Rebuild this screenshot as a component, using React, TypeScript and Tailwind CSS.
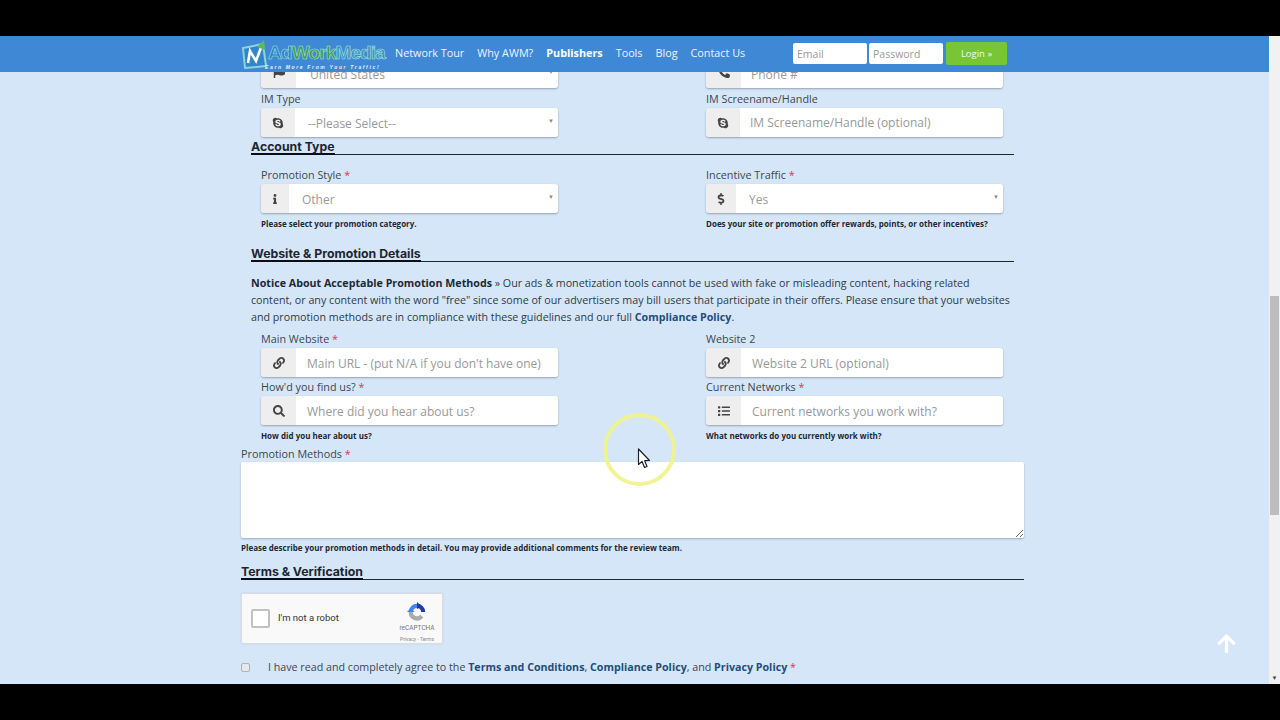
import React from 'react';
import { FaArrowUp, FaDollarSign, FaFlag, FaInfo, FaLink, FaList, FaPhone, FaSearch, FaSkype } from 'react-icons/fa';

const Star = () => <span className="text-[#d9364f]"> *</span>;

const Label: React.FC<{ text: string; required?: boolean }> = ({ text, required }) => (
  <label className="block h-[17px] text-[10.8px] leading-[15px] text-[#3d4650]">
    {text}
    {required && <Star />}
  </label>
);

const Help: React.FC<{ text: string; className?: string }> = ({ text, className = '' }) => (
  <p className={`h-[15px] text-[8px] leading-[15px] font-bold text-[#1f2933] ${className}`}>{text}</p>
);

const Heading: React.FC<{ text: string; className?: string }> = ({ text, className = '' }) => (
  <div className={`flex h-[17px] border-b border-[#1c2836] ${className}`}>
    <span className="h-[17px] border-b-2 border-[#0b0f14] font-['Inter',sans-serif] text-[12.3px] leading-[18px] font-bold text-[#1d2630]">
      {text}
    </span>
  </div>
);

interface FieldProps {
  icon: React.ReactNode;
  addon: string;
  text: string;
  select?: boolean;
  pad: string;
}

const Field: React.FC<FieldProps> = ({ icon, addon, text, select, pad }) => (
  <div className="relative flex h-[29px] w-[297px] rounded-[3px] shadow-[0_1px_2px_rgba(0,0,0,0.3)]">
    <div className={`flex shrink-0 items-center justify-center rounded-l-[3px] bg-[#eeeeee] text-[12px] text-[#444] ${addon}`}>{icon}</div>
    {select ? (
      <>
        <select defaultValue={text} className={`min-w-0 flex-1 appearance-none rounded-r-[3px] bg-white pt-[2px] text-[12px] text-[#999] outline-none ${pad}`}>
          <option>{text}</option>
        </select>
        <span className="absolute top-[9px] right-[4px] text-[6px] leading-[9px] text-[#888]">▼</span>
      </>
    ) : (
      <input placeholder={text} className={`min-w-0 flex-1 rounded-r-[3px] bg-white pt-[2px] text-[12px] outline-none placeholder:text-[#999] ${pad}`} />
    )}
  </div>
);

const Row: React.FC<{ left: React.ReactNode; right: React.ReactNode; className?: string }> = ({ left, right, className = '' }) => (
  <div className={`flex gap-[148px] px-[20px] ${className}`}>
    <div className="w-[297px]">{left}</div>
    <div className="w-[297px]">{right}</div>
  </div>
);

const Logo = () => (
  <div className="flex h-[36px] w-[146px] shrink-0 items-center">
    <svg viewBox="0 0 27 31" className="h-[31px] w-[27px] shrink-0">
      <path d="M2 9 L22 5 L25 27 L4 29 Z" fill="#2f86c9" stroke="#8fd3d6" strokeWidth="2" strokeLinejoin="round" />
      <path d="M7 24 L9 12 L15 22 L21 6" fill="none" stroke="#ffffff" strokeWidth="2.6" />
      <path d="M16 8 L23 1 L24 11 Z" fill="#5cb85c" />
    </svg>
    <div className="flex w-[119px] flex-col pt-[5px]">
      <span className="font-['Liberation_Sans',sans-serif] text-[19px] leading-[20px] font-bold tracking-[-0.85px] [-webkit-text-stroke:0.6px_#a9e3d4]">
        <span className="text-[#2a7fd0]">Ad</span>
        <span className="text-[#3f9a4a]">Work</span>
        <span className="text-[#3a93c8]">Media</span>
      </span>
      <span className="-ml-[3px] mt-[1px] whitespace-nowrap font-['Liberation_Sans',sans-serif] text-[5px] leading-[6px] font-bold tracking-[1.65px] text-[#e6f0fa] italic">
        Earn More From Your Traffic!
      </span>
    </div>
  </div>
);

const RecaptchaLogo = () => (
  <svg viewBox="0 0 24 24" className="h-[22px] w-[22px]">
    <path d="M12 3 A9 9 0 0 1 21 12 L16.5 12 A4.5 4.5 0 0 0 12 7.5 Z" fill="#1c3aa9" />
    <path d="M3 12 A9 9 0 0 1 12 3 L12 7.5 A4.5 4.5 0 0 0 7.5 12 Z" fill="#4285f4" />
    <path d="M3 12 A9 9 0 0 0 19 18 L15.5 15 A4.5 4.5 0 0 1 7.5 12 Z" fill="#ababab" />
    <path d="M1 12 L9.5 12 L5 8 Z" fill="#4285f4" />
    <path d="M12 1 L12 9 L16 5 Z" fill="#1c3aa9" />
  </svg>
);

export default function App() {
  return (
    <div className="h-[720px] w-[1280px] overflow-hidden bg-black py-[36px] font-['Open_Sans',sans-serif]">
      <div className="relative flex h-[648px] overflow-hidden bg-[#d5e6f9]">
        <header className="absolute top-0 right-[11px] left-0 z-10 flex h-[36px] items-center bg-[#3f88d5] pl-[241px]">
          <Logo />
          <nav className="mb-[2px] ml-[8px] flex gap-[13px] text-[10.8px] text-[#eef4fb]">
            <a>Network Tour</a>
            <a>Why AWM?</a>
            <a className="font-bold text-white">Publishers</a>
            <a>Tools</a>
            <a>Blog</a>
            <a>Contact Us</a>
          </nav>
          <div className="absolute top-[6px] left-[793px] flex items-start gap-[2px]">
            <input placeholder="Email" className="mt-[1px] h-[21px] w-[74px] rounded-[2px] bg-white px-[4px] pt-[1px] text-[10.5px] outline-none placeholder:text-[#999]" />
            <input placeholder="Password" className="mt-[1px] h-[21px] w-[74px] rounded-[2px] bg-white px-[4px] pt-[1px] text-[10.5px] outline-none placeholder:text-[#999]" />
            <button className="ml-[1px] h-[23px] w-[61px] rounded-[2px] bg-[#78c536] pt-[1px] text-[9.5px] text-[#f2fae8]">Login »</button>
          </div>
        </header>

        <main className="min-w-0 flex-1">
          <div className="ml-[241px] w-[783px] pt-[23px]">
            <Row
              left={<Field select icon={<FaFlag className="-mt-[4px]" />} addon="w-[35px]" text="United States" pad="pl-[14px]" />}
              right={<Field icon={<FaPhone className="-mt-[4px] -scale-x-100" />} addon="w-[35px]" text="Phone #" pad="pl-[10px]" />}
            />
            <Row
              className="mt-[3px]"
              left={<><Label text="IM Type" /><Field select icon={<FaSkype />} addon="w-[34px]" text="--Please Select--" pad="pl-[13px]" /></>}
              right={<><Label text="IM Screename/Handle" /><Field icon={<FaSkype />} addon="w-[34px]" text="IM Screename/Handle (optional)" pad="pl-[10px] pt-0!" /></>}
            />

            <div className="mx-[10px] mt-[1px]"><Heading text="Account Type" /></div>
            <Row
              className="mt-[12px]"
              left={<><Label text="Promotion Style" required /><Field select icon={<FaInfo className="text-[10px]" />} addon="w-[28px]" text="Other" pad="pl-[13px]" /><Help text="Please select your promotion category." className="mt-[3px]" /></>}
              right={<><Label text="Incentive Traffic" required /><Field select icon={<FaDollarSign />} addon="w-[30px]" text="Yes" pad="pl-[13px]" /><Help text="Does your site or promotion offer rewards, points, or other incentives?" className="mt-[3px] whitespace-nowrap" /></>}
            />

            <div className="mx-[10px] mt-[14px]"><Heading text="Website & Promotion Details" /></div>
            <p className="mt-[13px] ml-[10px] w-[761px] text-[10.7px] leading-[17px] text-[#2f3a45]">
              <b className="text-[#1f2933]">Notice About Acceptable Promotion Methods</b> » Our ads &amp; monetization tools cannot be used with fake or misleading content, hacking related content, or any content with the word "free" since some of our advertisers may bill users that participate in their offers. Please ensure that your websites and promotion methods are in compliance with these guidelines and our full <b className="text-[#1f4e79]">Compliance Policy</b>.
            </p>
            <Row
              className="mt-[5px]"
              left={<><Label text="Main Website" required /><Field icon={<FaLink />} addon="w-[35px]" text="Main URL - (put N/A if you don't have one)" pad="pl-[11px]" /></>}
              right={<><Label text="Website 2" /><Field icon={<FaLink />} addon="w-[35px]" text="Website 2 URL (optional)" pad="pl-[11px]" /></>}
            />
            <Row
              className="mt-[2px]"
              left={<><Label text="How'd you find us?" required /><Field icon={<FaSearch />} addon="w-[35px]" text="Where did you hear about us?" pad="pl-[11px]" /><Help text="How did you hear about us?" className="mt-[3px]" /></>}
              right={<><Label text="Current Networks" required /><Field icon={<FaList />} addon="w-[35px]" text="Current networks you work with?" pad="pl-[11px]" /><Help text="What networks do you currently work with?" className="mt-[3px]" /></>}
            />

            <div className="mt-[3px]"><Label text="Promotion Methods" required /></div>
            <textarea className="-mt-[1px] block h-[76px] w-[783px] rounded-[2px] bg-white shadow-[0_1px_2px_rgba(0,0,0,0.25)] outline-none" />
            <Help text="Please describe your promotion methods in detail. You may provide additional comments for the review team." className="mt-[2px]" />

            <Heading text="Terms & Verification" className="mt-[8px]" />

            <div className="mt-[13px] flex h-[51px] w-[202px] items-center rounded-[2px] border border-[#dcdcdc] bg-[#f9f9f9] pl-[9px] shadow-[0_0_2px_rgba(0,0,0,0.1)]">
              <span className="h-[19px] w-[19px] rounded-[2px] border-2 border-[#c1c1c1] bg-white" />
              <span className="ml-[8px] font-['Roboto',sans-serif] text-[9.5px] text-[#333]">I'm not a robot</span>
              <div className="mt-[7px] ml-auto flex w-[50px] flex-col items-center self-start">
                <RecaptchaLogo />
                <span className="mt-[1px] font-['Roboto',sans-serif] text-[6.5px] leading-[9px] text-[#777]">reCAPTCHA</span>
                <span className="mt-[2px] font-['Roboto',sans-serif] text-[5px] leading-[8px] text-[#888]">Privacy - Terms</span>
              </div>
            </div>

            <div className="mt-[15px] flex h-[17px] items-center text-[10.7px] text-[#3d4650]">
              <input type="checkbox" className="h-[9px] w-[9px] appearance-none rounded-[2px] border border-[#aab2ba] bg-[#e4e8ec]" />
              <span className="ml-[18px]">
                I have read and completely agree to the <b className="text-[#1f4e79]">Terms and Conditions</b>, <b className="text-[#1f4e79]">Compliance Policy</b>, and <b className="text-[#1f4e79]">Privacy Policy</b>
                <Star />
              </span>
            </div>
          </div>
        </main>

        <aside className="flex w-[11px] shrink-0 flex-col bg-[#f1f1f1]">
          <div className="mx-[1px] mt-[260px] h-[219px] bg-[#bdbdbd]" />
          <span className="mt-auto mb-[2px] text-center text-[6px] leading-[8px] text-[#444]">▼</span>
        </aside>

        <FaArrowUp className="absolute top-[597px] left-[1216px] text-[21px] text-white" />

        {/* cursor highlight from the screen recording */}
        <div className="absolute top-[377px] left-[603px] h-[73px] w-[73px] rounded-full border-[4px] border-[#f0f388]/90" />
        <svg viewBox="0 0 14 21" className="absolute top-[412px] left-[637px] h-[21px] w-[14px]">
          <path d="M1.5 1 L1.5 16.5 L5 13.5 L7.5 19.5 L10 18.5 L7.7 12.7 L12.5 12.5 Z" fill="#fff" stroke="#1b2230" strokeWidth="1.2" strokeLinejoin="round" />
        </svg>
      </div>
    </div>
  );
}
